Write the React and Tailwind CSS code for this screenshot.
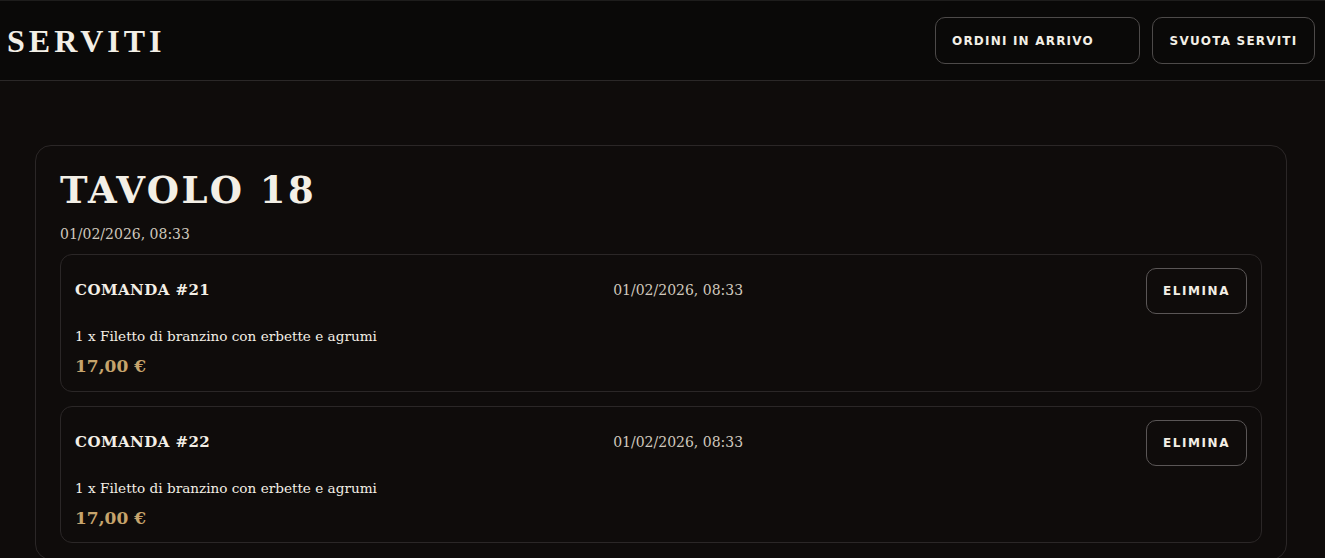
import React from "react";

function OrderCard({ num }) {
  return (
    <div className="rounded-[12px] border border-[#2b2727] px-[14px] pt-[13px] pb-[11px] font-['DejaVu_Serif',Georgia,serif]">
      <div className="flex items-center justify-between">
        <div className="text-[15px] font-bold tracking-[0.03em] text-[#f3efe6]">COMANDA #{num}</div>
        <div className="text-[14px] text-[#cfc8bd]">01/02/2026, 08:33</div>
        <button className="h-[46px] rounded-[10px] border border-[#5a5656] px-[16px] font-['DejaVu_Sans',Verdana,sans-serif] text-[12px] font-bold tracking-[0.13em] text-[#f3efe6]">
          ELIMINA
        </button>
      </div>
      <div className="mt-[12px] text-[13.6px] text-[#f3efe6]">1 x Filetto di branzino con erbette e agrumi</div>
      <div className="mt-[8px] text-[17px] font-bold text-[#c6a46c]">17,00 €</div>
    </div>
  );
}

export default function App() {
  return (
    <div className="min-h-[558px] bg-[#0f0c0b]">
      <header className="flex h-[81px] items-center justify-between border-t border-b border-t-[#1e1d1c] border-b-[#2b2828] bg-[#0a0908] pl-[7px] pr-[10px]">
        <h1 className="font-['Liberation_Serif',Georgia,serif] text-[32px] font-bold tracking-[0.125em] text-[#f3efe6]">SERVITI</h1>
        <div className="flex gap-[12px] font-['DejaVu_Sans',Verdana,sans-serif]">
          <button className="h-[47px] w-[205px] rounded-[10px] border border-[#4d4a49] pl-[16px] text-left text-[12px] font-bold tracking-[0.1em] text-[#f3efe6]">
            ORDINI IN ARRIVO
          </button>
          <button className="h-[47px] w-[163px] rounded-[10px] border border-[#4d4a49] text-[12px] font-bold tracking-[0.1em] text-[#f3efe6]">
            SVUOTA SERVITI
          </button>
        </div>
      </header>
      <main className="pl-[35px] pr-[38px] pt-[64px]">
        <section className="rounded-[16px] border border-[#2b2727] px-[24px] pt-[24px] pb-[16px] font-['DejaVu_Serif',Georgia,serif]">
          <h2 className="text-[37px] font-bold leading-[1.1] tracking-[0.065em] text-[#f3efe6]">TAVOLO 18</h2>
          <div className="mt-[13px] text-[14px] text-[#cfc8bd]">01/02/2026, 08:33</div>
          <div className="mt-[9px] flex flex-col gap-[14px]">
            <OrderCard num={21} />
            <OrderCard num={22} />
          </div>
        </section>
      </main>
    </div>
  );
}
